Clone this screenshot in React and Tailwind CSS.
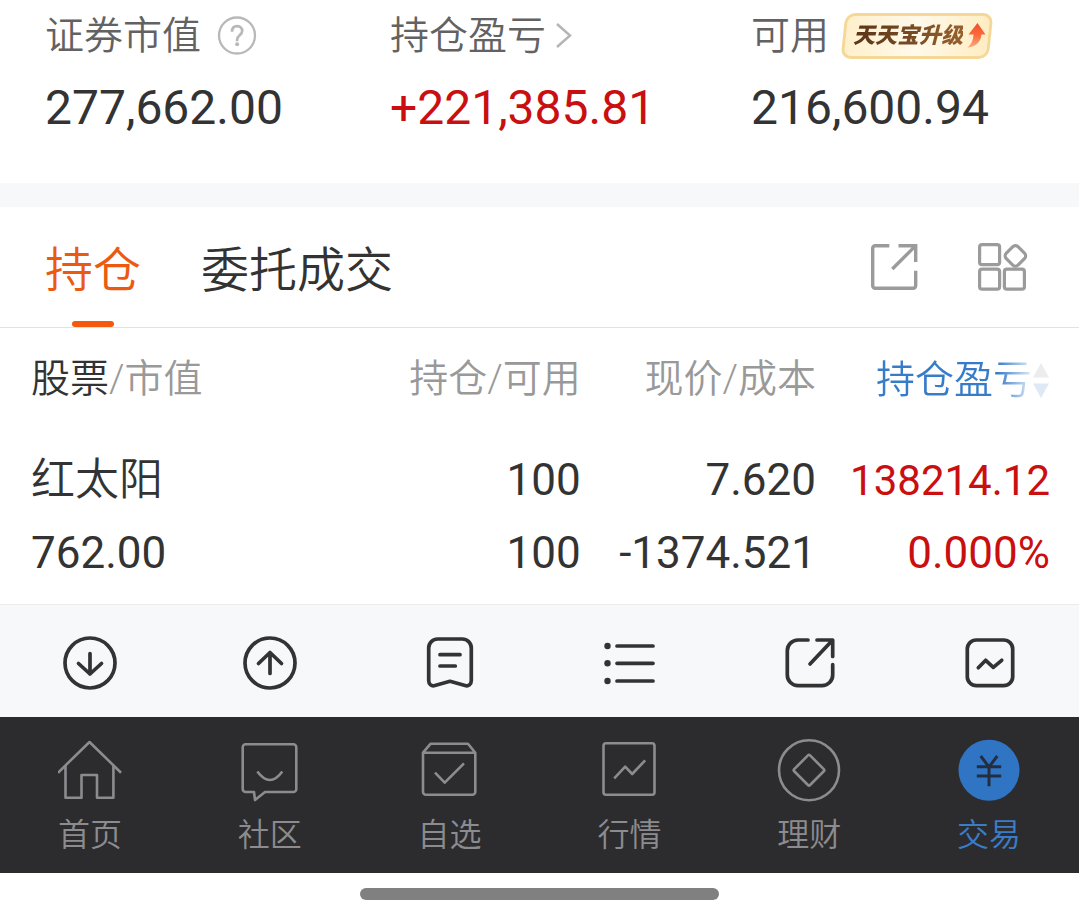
import React from "react";

const toolbarItems = [
  {
    label: "买入",
    icon: (
      <>
        <circle cx="27" cy="27" r="25" />
        <path d="M27 17.5V38M15.5 27.5 27 38l11.5-10.5" />
      </>
    ),
  },
  {
    label: "卖出",
    icon: (
      <>
        <circle cx="27" cy="27" r="25" />
        <path d="M27 37.5V16.5M15.5 27.5 27 16.5l11.5 11" />
      </>
    ),
  },
  {
    label: "撤单",
    icon: (
      <path d="M5.7 12a9 9 0 0 1 9-9h24.6a9 9 0 0 1 9 9v32.5c0 4-2.8 6-6.2 5L27 45.3 11.9 49.5c-3.4 1-6.2-1-6.2-5zM17 18.7h20M17 30h15.3" />
    ),
  },
  {
    label: "列表",
    icon: (
      <>
        <path d="M15 10h36M15 27.3h36M15 45h36" />
        <g fill="currentColor" stroke="none">
          <circle cx="5.5" cy="10" r="3.2" />
          <circle cx="5.5" cy="27.3" r="3.2" />
          <circle cx="5.5" cy="45" r="3.2" />
        </g>
      </>
    ),
  },
  {
    label: "分享",
    icon: (
      <path d="M26 4H16A10.7 10.7 0 0 0 5.3 14.7V39A10.7 10.7 0 0 0 16 49.7h24A10.7 10.7 0 0 0 50.7 39V28.7M35 4h15.7v16.5M50 4.7 28 28" />
    ),
  },
  {
    label: "走势",
    icon: (
      <>
        <rect x="5.3" y="4" width="45.4" height="45.7" rx="9" />
        <path d="m16.3 31.7 7.4-7.4 7.6 7 8.4-7" />
      </>
    ),
  },
];

const navItems = [
  {
    label: "首页",
    icon: (
      <path d="M0 34.7 31.5 4 63 34.7M7.5 28v31.7h16V37H39v22.7h16.4V28" />
    ),
  },
  {
    label: "社区",
    icon: (
      <path d="M7.7 6.3h47.6a3 3 0 0 1 3 3V51a3 3 0 0 1-3 3H27l-10 8-1-8H7.7a3 3 0 0 1-3-3V9.3a3 3 0 0 1 3-3zM19.3 33.5q12.7 17 25 0" />
    ),
  },
  {
    label: "自选",
    icon: (
      <path d="M5 14.7 12.7 5.7H50l7.3 9v39a3 3 0 0 1-3 3H8a3 3 0 0 1-3-3zM5 14.7h52.3M17 34.7l9.7 10L46 25.3" />
    ),
  },
  {
    label: "行情",
    icon: (
      <>
        <rect x="6.5" y="5.3" width="51" height="51.4" rx="2.5" />
        <path d="m17.2 40.3 11-11.6 7 7.3 13-13.7" />
      </>
    ),
  },
  {
    label: "理财",
    icon: (
      <>
        <circle cx="32" cy="32.2" r="30" />
        <rect x="20.8" y="21" width="22.4" height="22.4" rx="1.5" transform="rotate(45 32 32.2)" />
      </>
    ),
  },
  {
    label: "交易",
    active: true,
    icon: (
      <>
        <circle cx="32" cy="32.2" r="30.5" fill="#3075c4" stroke="none" />
        <path
          stroke="#232e40"
          strokeWidth="3"
          strokeLinecap="butt"
          d="m23.7 18 8.3 11 8.3-11M32 29v19.3M19.8 28.7h24.4M19.8 37.9h24.4"
        />
      </>
    ),
  },
];

const holdings = [
  {
    name: "红太阳",
    value: "762.00",
    held: "100",
    available: "100",
    price: "7.620",
    cost: "-1374.521",
    profit: "138214.12",
    rate: "0.000%",
  },
];

function Summary() {
  return (
    <section className="grid grid-cols-[345fr_361fr_328fr] bg-white pt-3 pb-[47px] pl-[45px]">
      <div>
        <div className="flex h-12 items-center gap-4 text-[39px] leading-12 font-[350] text-[#626262]">
          证券市值
          <button type="button" aria-label="说明">
            <svg width="40" height="40" viewBox="0 0 40 40" fill="none" stroke="#b8b8b8" strokeWidth="2.3">
              <circle cx="20" cy="19.5" r="18" />
              <path strokeWidth="2.7" d="M15 15.7c0-3.6 2-5.6 5.1-5.6s5.1 2 5.1 4.9c0 4.3-5.1 4.4-5.1 8.7v1.5" />
              <circle cx="20.1" cy="28.2" r="2" fill="#b8b8b8" stroke="none" />
            </svg>
          </button>
        </div>
        <p className="mt-5 text-5xl leading-14">277,662.00</p>
      </div>
      <div>
        <button type="button" className="flex h-12 items-center gap-2.5 text-[39px] leading-12 font-[350] text-[#626262]">
          持仓盈亏
          <svg width="16" height="26" viewBox="0 0 16 26" fill="none" stroke="#b5b5b5" strokeWidth="2.5">
            <path d="M1 1l13 11.5L1 24" />
          </svg>
        </button>
        <p className="mt-5 text-5xl leading-14 text-[#c90f0f]">+221,385.81</p>
      </div>
      <div>
        <div className="flex h-12 items-center gap-3.5 text-[39px] leading-12 font-[350] text-[#626262]">
          可用
          <button type="button" className="relative flex h-[46px] items-center gap-1 pr-1 pl-2.5">
            <span className="absolute inset-0 -skew-x-6 rounded-[10px] border-3 border-[#f5d898] bg-linear-to-r from-[#fff0cc] via-[#fff9ea] to-[#ffedc2]" />
            <span className="relative bg-linear-to-r from-[#5a3417] to-[#96602f] bg-clip-text text-[22px] font-black text-transparent italic">
              天天宝升级
            </span>
            <svg className="relative" width="20" height="26" viewBox="0 0 20 26">
              <defs>
                <linearGradient id="rise" x1="0" y1="0" x2="0" y2="1">
                  <stop offset="0" stopColor="#f4502c" />
                  <stop offset=".5" stopColor="#fa6a3c" />
                  <stop offset="1" stopColor="#ffab7c" />
                </linearGradient>
              </defs>
              <path fill="url(#rise)" d="M10.5 0 18.5 11.5h-4.1C14 18 10 23.5 .5 24.5c4.200-3.500 5.800-7.500 6-13H1.500z" />
            </svg>
          </button>
        </div>
        <p className="mt-5 text-5xl leading-14">216,600.94</p>
      </div>
    </section>
  );
}

function Tabs() {
  return (
    <div className="flex h-[121px] items-stretch border-b border-[#e2e2e2] bg-white pr-[51px] pl-[45px]">
      <div role="tablist" className="flex flex-1 gap-[60px] text-5xl font-[350]">
        <button type="button" role="tab" aria-selected="true" className="relative pt-2 text-[#ea5a10]">
          持仓
          <span className="absolute bottom-0 left-1/2 h-1.5 w-[42px] -translate-x-1/2 rounded-full bg-[#f55a0c]" />
        </button>
        <button type="button" role="tab" aria-selected="false" className="pt-2">
          委托成交
        </button>
      </div>
      <div className="flex items-center gap-[60px] text-[#9b9b9b]">
        <button type="button" aria-label="分享">
          <svg width="47" height="46" viewBox="0 0 47 46" fill="none" stroke="currentColor" strokeWidth="3.4">
            <path d="M18.3 1.7H4.2a2.5 2.5 0 0 0-2.5 2.5v37.6a2.5 2.5 0 0 0 2.5 2.5h38a2.5 2.5 0 0 0 2.5-2.5V26.7M27.5 1.7h17.2V18M44 2.4 21.3 25" />
          </svg>
        </button>
        <button type="button" aria-label="更多">
          <svg width="50" height="48" viewBox="0 0 50 48" fill="none" stroke="currentColor" strokeWidth="3.2">
            <rect x="1.6" y="1.7" width="20" height="20" rx="2.5" />
            <rect x="1.6" y="26.2" width="20" height="20" rx="2.5" />
            <rect x="26.4" y="26.2" width="20" height="20" rx="2.5" />
            <rect x="29" y="4.5" width="16.8" height="16.8" rx="4" transform="rotate(45 37.4 12.9)" />
          </svg>
        </button>
      </div>
    </div>
  );
}

function Holdings() {
  return (
    <table className="w-full table-fixed border-collapse bg-white text-right whitespace-nowrap">
      <colgroup>
        <col className="w-[32%]" />
        <col className="w-[22%]" />
        <col className="w-[22%]" />
        <col className="w-[24%]" />
      </colgroup>
      <thead>
        <tr className="h-[102px] text-[39px] text-[#999]">
          <th scope="col" className="p-0 pl-[31px] text-left font-[350]">
            <span className="text-[#333]">股票</span>/市值
          </th>
          <th scope="col" className="p-0 pr-0.5 font-[350]">持仓/可用</th>
          <th scope="col" className="p-0 pr-1 font-[350]">现价/成本</th>
          <th scope="col" className="p-0 pr-[29px] font-[350]">
            <button type="button" className="inline-flex items-center align-middle">
              <span className="bg-linear-to-r from-[#377cc8] from-78% to-[#e3ecf7] bg-clip-text text-transparent">
                持仓盈亏
              </span>
              <svg width="18" height="36" viewBox="0 0 18 36">
                <path fill="#ececec" d="M9 1l8 14.5H1z" />
                <path fill="#dfe9f5" d="M9 36 1 21.5h16z" />
              </svg>
            </button>
          </th>
        </tr>
      </thead>
      <tbody>
        {holdings.map((h) => (
          <tr key={h.name} className="text-[44px] leading-[73px]">
            <td className="p-0 pt-3.5 pb-3.5 pl-[31px] text-left">
              <div className="font-[350]">{h.name}</div>
              <div>{h.value}</div>
            </td>
            <td className="p-0 pt-3.5 pr-0.5 pb-3.5">
              <div>{h.held}</div>
              <div>{h.available}</div>
            </td>
            <td className="p-0 pt-3.5 pr-1 pb-3.5">
              <div>{h.price}</div>
              <div>{h.cost}</div>
            </td>
            <td className="p-0 pt-3.5 pr-[29px] pb-3.5 text-[#c90f0f]">
              <div className="text-[42px]">{h.profit}</div>
              <div>{h.rate}</div>
            </td>
          </tr>
        ))}
      </tbody>
    </table>
  );
}

export default function App() {
  return (
    <main className="w-full bg-white font-[Roboto,'Noto_Sans_CJK_SC',sans-serif] text-[#333]">
      <Summary />
      <div className="h-6 bg-[#f7f8fa]" />
      <Tabs />
      <Holdings />
      <div className="grid grid-cols-6 border-t border-[#ebebeb] bg-[#f7f8fa] pt-[31px] pb-[27px]">
        {toolbarItems.map((item) => (
          <button key={item.label} type="button" aria-label={item.label} className="flex justify-center">
            <svg
              width="54"
              height="54"
              viewBox="0 0 54 54"
              fill="none"
              stroke="currentColor"
              strokeWidth="3.7"
              strokeLinecap="round"
              strokeLinejoin="round"
            >
              {item.icon}
            </svg>
          </button>
        ))}
      </div>
      <nav className="grid grid-cols-6 bg-[#2c2c2e] pt-[21px] pb-[18px]">
        {navItems.map((item) => (
          <a
            key={item.label}
            href="#"
            aria-current={item.active ? "page" : undefined}
            className={
              item.active
                ? "flex flex-col items-center gap-[13px] text-[#3b7cc9]"
                : "flex flex-col items-center gap-[13px] text-[#8c8c90]"
            }
          >
            <svg
              width="64"
              height="64"
              viewBox="0 0 64 64"
              fill="none"
              stroke="currentColor"
              strokeWidth="2.6"
              strokeLinejoin="round"
            >
              {item.icon}
            </svg>
            <span className="text-[32px] leading-10 font-[350]">{item.label}</span>
          </a>
        ))}
      </nav>
      <div className="bg-white pt-[15px] pb-[21px]">
        <div className="mx-auto h-3 w-1/3 rounded-full bg-[#808080]" />
      </div>
    </main>
  );
}
